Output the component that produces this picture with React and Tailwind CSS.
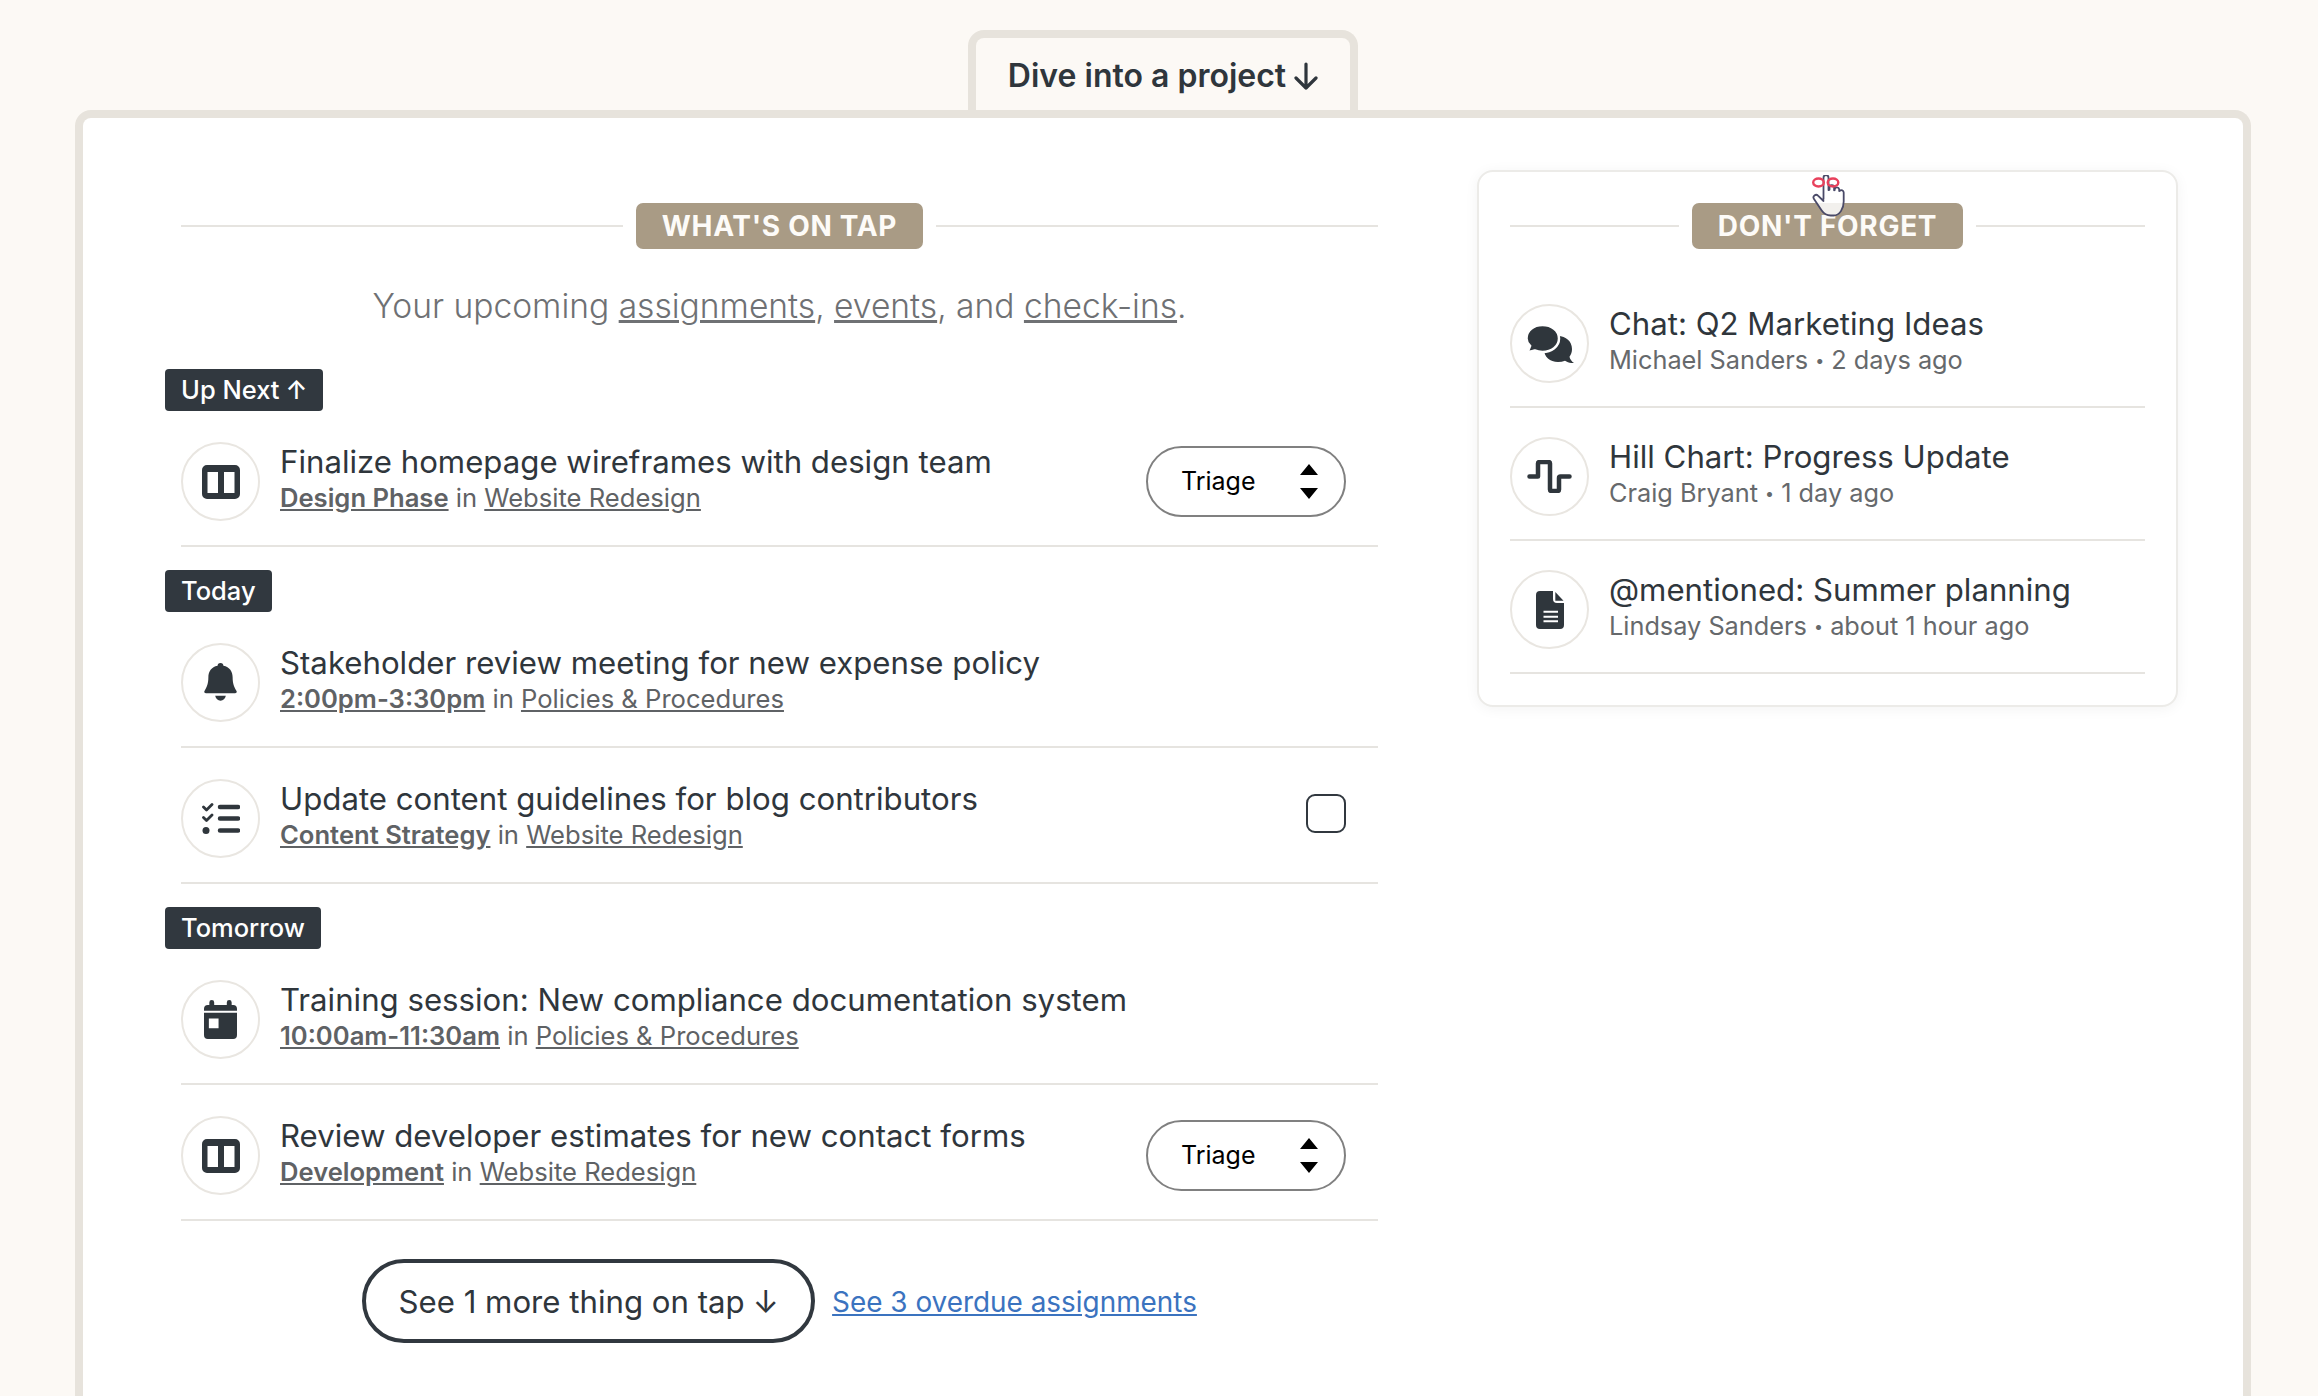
import { Fragment } from 'react'

const dark = '#2f363c'

function CardTableIcon() {
  return (
    <svg width="38" height="34" viewBox="0 0 38 34" fill={dark}>
      <path fillRule="evenodd" d="M5 0h28a5 5 0 0 1 5 5v24a5 5 0 0 1-5 5H5a5 5 0 0 1-5-5V5a5 5 0 0 1 5-5zm.500 7v21h10.500V7H5.500zm16.500 0v21h10.500V7H22z" />
    </svg>
  )
}

function BellIcon() {
  return (
    <svg width="33" height="39" viewBox="0 0 34 44" fill={dark} preserveAspectRatio="none">
      <path d="M17 0c2 0 3 1.400 3 3.200 6.400 1.400 9.500 6.500 9.500 13 0 7 1.500 11 4 15.300.6 1 .1 2.500-1.500 2.500H2c-1.600 0-2.100-1.500-1.500-2.500C3 27.200 4.500 23.200 4.500 16.200c0-6.500 3.100-11.600 9.500-13C14 1.400 15 0 17 0z" />
      <path d="M11.500 37h11c-.6 3.500-2.800 5.500-5.500 5.500s-4.900-2-5.500-5.500z" />
    </svg>
  )
}

function ChecklistIcon() {
  return (
    <svg width="38" height="31" viewBox="0 0 38 31" fill="none" stroke={dark}>
      <path d="M1.500 4l3 3L10 1.500M1.500 14.500l3 3L10 12" strokeWidth="2.800" strokeLinecap="round" strokeLinejoin="round" />
      <circle cx="4" cy="27.500" r="3.500" fill={dark} stroke="none" />
      <path d="M18 4h18M18 15.500h18M18 27.500h18" strokeWidth="4.500" strokeLinecap="round" />
    </svg>
  )
}

function CalendarIcon() {
  return (
    <svg width="33" height="39" viewBox="0 0 34 40" fill={dark}>
      <path d="M8 0a2.500 2.500 0 0 1 2.500 2.500V5h13V2.500a2.500 2.500 0 0 1 5 0V5H30a4 4 0 0 1 4 4v2H0V9a4 4 0 0 1 4-4h1.500V2.500A2.500 2.500 0 0 1 8 0z" />
      <path fillRule="evenodd" d="M0 13h34v23a4 4 0 0 1-4 4H4a4 4 0 0 1-4-4V13zm5 6v10h10V19H5z" />
    </svg>
  )
}

function ChatIcon() {
  return (
    <svg width="48" height="38" viewBox="0 0 48 38" fill={dark}>
      {/* small bubble behind, big bubble on top with a white edge */}
      <path d="M32 11c8 0 14 5.500 14 13 0 3-.9 5.500-2.500 7.700.4 2.300 2 4.500 4.500 6.300-3.500.3-6.500-.6-9-2.200-2.100.8-4.400 1.200-7 1.200-8 0-14-5-14-13s6-13 14-13z" />
      <path
        d="M16.500 0C25.500 0 33 5.500 33 13.500S25.500 27 16.500 27c-2.800 0-5.400-.5-7.700-1.500-2.200 1-5 1.500-8.300 1 2-1.500 3.200-3.500 3.600-5.500C2 19 .5 16.500.5 13.500.5 5.500 7.500 0 16.500 0z"
        stroke="#fff"
        strokeWidth="2.500"
      />
    </svg>
  )
}

function HillIcon() {
  return (
    <svg width="46" height="33" viewBox="0 0 46 33" fill="none" stroke={dark} strokeWidth="4.500" strokeLinecap="round" strokeLinejoin="round">
      <path d="M2.500 16.500H11V3.500q0-1.500 1.500-1.500h9q1.500 0 1.500 1.500v26q0 1.500 1.500 1.500h6q1.500 0 1.500-1.500V18q0-1.500 1.500-1.500h9" />
    </svg>
  )
}

function DocIcon() {
  return (
    <svg width="28" height="38" viewBox="0 0 28 38" fill={dark}>
      <path fillRule="evenodd" d="M4 0h13v8a4 4 0 0 0 4 4h7v22a4 4 0 0 1-4 4H4a4 4 0 0 1-4-4V4a4 4 0 0 1 4-4zm3.500 19.700v2h14.500v-2H7.500zm0 5v2h14.500v-2H7.500zm0 4.600v2h14.500v-2H7.500z" />
      <path d="M19.300 1l8.200 8.700h-8.200V1z" />
    </svg>
  )
}

function IconCircle({ children }) {
  return (
    <div className="flex h-[79px] w-[79px] shrink-0 items-center justify-center rounded-full border-2 border-[#e9e6e1] bg-white">
      {children}
    </div>
  )
}

// Little ribbon-on-finger cursor that sits over the card heading
function ReminderCursor() {
  return (
    <svg className="absolute left-[333px] top-[3px]" width="34" height="42" viewBox="0 0 34 42" fill="none">
      <path
        d="M11.500 24V2.700a2.500 2.500 0 0 1 5 0V15l1-.2v-2.300a2.300 2.300 0 0 1 4.600 0v2.800l.6-.1v-1a2.300 2.300 0 0 1 4.500 0v1.800l.5-.1a2.300 2.300 0 0 1 4 1.600v9c0 7-4 14-10 14h-3c-4 0-7-2-9-5L2 24a2.600 2.600 0 0 1 4-3.300l5.500 5.300"
        fill="#ffffffd9"
        stroke="#4a4a68"
        strokeWidth="1.800"
        strokeLinecap="round"
        strokeLinejoin="round"
      />
      <ellipse cx="6.500" cy="7.500" rx="5.300" ry="4" stroke="#e8415c" strokeWidth="2.400" />
      <ellipse cx="21" cy="7.500" rx="5.300" ry="4" stroke="#e8415c" strokeWidth="2.400" />
    </svg>
  )
}

function SectionHeading({ label }) {
  return (
    <div className="flex items-center gap-[13px]">
      <div className="h-[2px] flex-1 bg-[#e6e4e0]" />
      <span className="flex h-[46px] items-center rounded-[7px] bg-[#a99b85] px-[26px] text-[28px] font-bold tracking-[0.7px] text-[#fdfbf8]">
        {label}
      </span>
      <div className="h-[2px] flex-1 bg-[#e6e4e0]" />
    </div>
  )
}

function DayLabel({ children }) {
  return (
    <div className="-ml-4 mt-[23px] inline-flex h-[42px] items-center self-start rounded-[4px] bg-[#31383f] px-4 text-[25.500px] font-medium text-white">
      {children}
    </div>
  )
}

function TriageSelect() {
  return (
    <div className="mr-8 flex h-[71px] w-[200px] shrink-0 items-center justify-between rounded-full border-2 border-[#808080] pl-[33px] pr-[26px] text-[25px] text-black">
      <span>Triage</span>
      <svg width="18" height="35" viewBox="0 0 18 35" fill="#000">
        <path d="M9 0l9 11H0zM0 24h18l-9 11z" />
      </svg>
    </div>
  )
}

function TaskRow({ icon, title, strong, project, control }) {
  return (
    <div className="flex items-center border-b-2 border-[#e6e4e0] pb-[24px] pt-[31px]">
      <IconCircle>{icon}</IconCircle>
      <div className="ml-[20px] min-w-0 flex-1 -translate-y-[3px]">
        <div className="text-[31.200px] leading-[37px] text-[#2f363c]">{title}</div>
        <div className="text-[25.600px] leading-[33px] text-[#5f6265]">
          <span className="font-semibold underline">{strong}</span> in <span className="underline">{project}</span>
        </div>
      </div>
      {control}
    </div>
  )
}

function ReminderRow({ icon, title, who, when }) {
  return (
    <div className="flex items-start border-b-2 border-[#e6e4e0] pb-[23px] pt-[29px]">
      <IconCircle>{icon}</IconCircle>
      <div className="ml-[20px] pt-px">
        <div className="text-[31.200px] leading-[38px] text-[#2f363c]">{title}</div>
        <div className="mt-[1px] text-[25.300px] leading-[32px] text-[#66696c]">
          {who} <span className="inline-block -translate-y-[3px] text-[16px]">•</span> {when}
        </div>
      </div>
    </div>
  )
}

const groups = [
  {
    label: (
      <Fragment>
        Up Next <span className="ml-[6px]">↑</span>
      </Fragment>
    ),
    rows: [
      {
        icon: <CardTableIcon />,
        title: 'Finalize homepage wireframes with design team',
        strong: 'Design Phase',
        project: 'Website Redesign',
        control: <TriageSelect />,
      },
    ],
  },
  {
    label: 'Today',
    rows: [
      {
        icon: <BellIcon />,
        title: 'Stakeholder review meeting for new expense policy',
        strong: '2:00pm-3:30pm',
        project: 'Policies & Procedures',
      },
      {
        icon: <ChecklistIcon />,
        title: 'Update content guidelines for blog contributors',
        strong: 'Content Strategy',
        project: 'Website Redesign',
        control: <div className="mb-[10px] mr-8 h-[39px] w-[40px] shrink-0 rounded-[9px] border-2 border-[#31383f]" />,
      },
    ],
  },
  {
    label: 'Tomorrow',
    rows: [
      {
        icon: <CalendarIcon />,
        title: 'Training session: New compliance documentation system',
        strong: '10:00am-11:30am',
        project: 'Policies & Procedures',
      },
      {
        icon: <CardTableIcon />,
        title: 'Review developer estimates for new contact forms',
        strong: 'Development',
        project: 'Website Redesign',
        control: <TriageSelect />,
      },
    ],
  },
]

const reminders = [
  { icon: <ChatIcon />, title: 'Chat: Q2 Marketing Ideas', who: 'Michael Sanders', when: '2 days ago' },
  { icon: <HillIcon />, title: 'Hill Chart: Progress Update', who: 'Craig Bryant', when: '1 day ago' },
  { icon: <DocIcon />, title: '@mentioned: Summer planning', who: 'Lindsay Sanders', when: 'about 1 hour ago' },
]

export default function App() {
  return (
    <div className="flex h-[1396px] flex-col items-center overflow-hidden bg-[#fcf9f5] pl-[8px] pt-[30px] font-[Inter,sans-serif] text-[#2f363c]">
      {/* Tab on top of the panel */}
      <div className="flex h-[80px] w-[390px] shrink-0 items-center justify-center rounded-t-[16px] border-8 border-b-0 border-[#e7e3dc] pt-[3px] text-[32px] font-semibold">
        Dive into a project
        <svg className="ml-[8px]" width="24" height="28" viewBox="0 0 24 28" fill="none" stroke={dark} strokeWidth="3.200" strokeLinecap="round" strokeLinejoin="round">
          <path d="M12 2v24M2 16l10 10 10-10" />
        </svg>
      </div>

      {/* Main panel */}
      <div className="flex h-[1400px] w-[2176px] shrink-0 items-start rounded-t-[16px] border-8 border-b-0 border-[#e7e3dc] bg-white pl-[98px] pt-[52px]">
        <div className="mt-[33px] flex w-[1197px] shrink-0 flex-col">
          <SectionHeading label="WHAT'S ON TAP" />
          <p className="mb-[19px] mt-[36px] text-center text-[33.600px] font-light leading-[42px] text-[#6f7174]">
            Your upcoming <span className="underline">assignments</span>, <span className="underline">events</span>, and{' '}
            <span className="underline">check-ins</span>.
          </p>

          {groups.map((group, i) => (
            <Fragment key={i}>
              <DayLabel>{group.label}</DayLabel>
              {group.rows.map((row) => (
                <TaskRow key={row.title} {...row} />
              ))}
            </Fragment>
          ))}

          <div className="mt-[38px] flex items-center justify-center gap-[17px]">
            <button className="flex h-[84px] w-[453px] items-center justify-center rounded-full border-4 border-[#31383f] pt-[3px] text-[31.200px] text-[#2f363c]">
              See 1 more thing on tap <span className="ml-[8px]">↓</span>
            </button>
            <a className="pt-[3px] text-[27.900px] text-[#3b73bf] underline">See 3 overdue assignments</a>
          </div>
        </div>

        {/* Don't forget card */}
        <div className="relative ml-[99px] w-[701px] shrink-0 rounded-[16px] border-2 border-[#ecebe8] bg-white px-[31px] pb-[31px] pt-[31px] shadow-[0_2px_14px_rgba(0,0,0,0.05)]">
          <SectionHeading label="DON'T FORGET" />
          <div className="mt-[26px]">
            {reminders.map((item) => (
              <ReminderRow key={item.title} {...item} />
            ))}
          </div>
          <ReminderCursor />
        </div>
      </div>
    </div>
  )
}
